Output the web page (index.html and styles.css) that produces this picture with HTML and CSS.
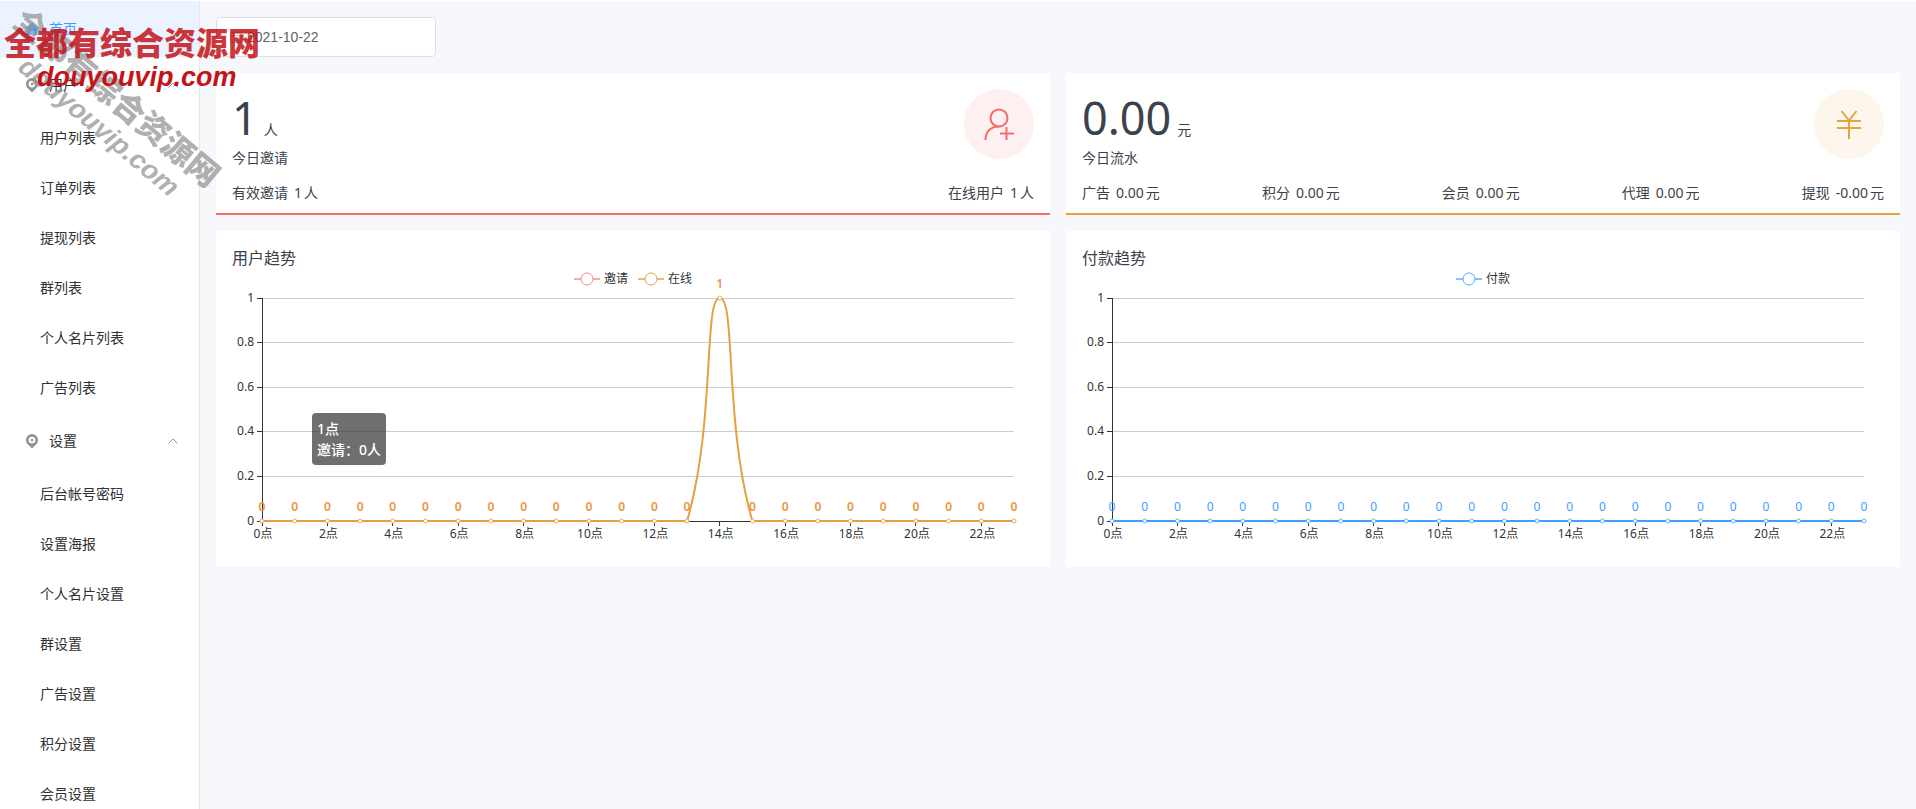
FILE: index.html
```html
<!DOCTYPE html>
<html lang="zh-CN">
<head>
<meta charset="utf-8">
<meta name="viewport" content="width=device-width, initial-scale=1">
<title>首页</title>
<link rel="stylesheet" href="styles.css">
</head>
<body>
<svg class="symbols" aria-hidden="true">
  <symbol id="home" viewBox="0 0 16 16">
    <path fill="currentColor" d="M8 1.500 15.500 8H13.500v6H9.500v-4h-3v4h-4V8H.5Z"/>
  </symbol>
  <symbol id="pin" viewBox="0 0 16 16">
    <path fill="currentColor" fill-rule="evenodd" d="M8 15.500 4.200 11.800A6.100 6.100 0 0 1 1.900 7.100a6.100 6.100 0 0 1 12.200 0 6.100 6.100 0 0 1-2.300 4.700ZM8 3.700a3.400 3.400 0 1 0 0 6.800 3.400 3.400 0 0 0 0-6.800Z"/>
    <circle cx="8" cy="7.100" r="1.300" fill="currentColor"/>
  </symbol>
  <symbol id="chevron" viewBox="0 0 12 12">
    <path d="M1.500 8.500 6 4l4.500 4.500" fill="none" stroke="currentColor"/>
  </symbol>
</svg>
<div class="layout">
  <nav class="sidebar">
    <a class="item active" href="#"><svg class="icon"><use href="#home"/></svg><span>首页</span></a>
    <button class="item" type="button"><svg class="icon"><use href="#pin"/></svg><span>用户</span><svg class="arrow"><use href="#chevron"/></svg></button>
    <div class="submenu">
      <a href="#">用户列表</a>
      <a href="#">订单列表</a>
      <a href="#">提现列表</a>
      <a href="#">群列表</a>
      <a href="#">个人名片列表</a>
      <a href="#">广告列表</a>
    </div>
    <button class="item" type="button"><svg class="icon"><use href="#pin"/></svg><span>设置</span><svg class="arrow"><use href="#chevron"/></svg></button>
    <div class="submenu">
      <a href="#">后台帐号密码</a>
      <a href="#">设置海报</a>
      <a href="#">个人名片设置</a>
      <a href="#">群设置</a>
      <a href="#">广告设置</a>
      <a href="#">积分设置</a>
      <a href="#">会员设置</a>
    </div>
  </nav>
  <main class="main">
    <label class="date">
      <svg class="calendar" viewBox="0 0 14 14" fill="none" stroke="currentColor"><path d="M1.500 2.500h11v10h-11zM1.500 5.500h11M4.500 1v3M9.500 1v3M4 8h2M8 8h2M4 10.500h2M8 10.500h2"/></svg>
      <input type="text" value="2021-10-22" aria-label="日期">
    </label>
    <div class="grid">
      <section class="card stat red">
        <div class="stat-head">
          <div>
            <div class="big"><strong>1</strong><span>人</span></div>
            <div class="caption">今日邀请</div>
          </div>
          <div class="badge">
            <svg viewBox="0 0 32 32" fill="none" stroke="currentColor" stroke-width="2"><circle cx="16" cy="10" r="8.500"/><path d="M2.500 32c0-8 5-13.500 13.500-13.500M23.500 19V32M17 25.500H31"/></svg>
          </div>
        </div>
        <div class="details">
          <div><span>有效邀请</span><b>1</b><i>人</i></div>
          <div><span>在线用户</span><b>1</b><i>人</i></div>
        </div>
      </section>
      <section class="card stat orange">
        <div class="stat-head">
          <div>
            <div class="big"><strong>0.00</strong><span>元</span></div>
            <div class="caption">今日流水</div>
          </div>
          <div class="badge">
            <svg viewBox="0 0 32 32" fill="none" stroke="currentColor" stroke-width="2"><path d="m8.500 3 7.500 9.500L23.500 3M4 13h24M4 20h24M16 12.500V31"/></svg>
          </div>
        </div>
        <div class="details">
          <div><span>广告</span><b>0.00</b><i>元</i></div>
          <div><span>积分</span><b>0.00</b><i>元</i></div>
          <div><span>会员</span><b>0.00</b><i>元</i></div>
          <div><span>代理</span><b>0.00</b><i>元</i></div>
          <div><span>提现</span><b>-0.00</b><i>元</i></div>
        </div>
      </section>
      <section class="card">
        <h2>用户趋势</h2>
        <div class="legend">
          <button type="button" class="key pink"><svg viewBox="0 0 26 14"><path d="M0 7h26"/><circle cx="13" cy="7" r="6"/></svg>邀请</button>
          <button type="button" class="key amber"><svg viewBox="0 0 26 14"><path d="M0 7h26"/><circle cx="13" cy="7" r="6"/></svg>在线</button>
        </div>
        <div class="chart">
          <svg class="plot users" data-peak="14"></svg>
          <div class="tooltip">1点<br>邀请：0人</div>
        </div>
      </section>
      <section class="card">
        <h2>付款趋势</h2>
        <div class="legend">
          <button type="button" class="key blue"><svg viewBox="0 0 26 14"><path d="M0 7h26"/><circle cx="13" cy="7" r="6"/></svg>付款</button>
        </div>
        <div class="chart">
          <svg class="plot pay"></svg>
        </div>
      </section>
    </div>
  </main>
</div>
<div class="mark mark-gray" aria-hidden="true"><div>全都有综合资源网</div><em>douyouvip.com</em></div>
<div class="mark mark-red" aria-hidden="true"><div>全都有综合资源网</div><em>douyouvip.com</em></div>
<script src="chart.js"></script>
</body>
</html>
```
FILE: styles.css
```css
* { box-sizing: border-box; }
body {
  margin: 0;
  padding-top: 1px;
  height: 100vh;
  overflow: hidden;
  position: relative;
  font: 14px/20px "Noto Sans", "Noto Sans CJK SC", sans-serif;
  color: #3b424c;
  background: #fff;
}
.symbols { position: absolute; width: 0; height: 0; }
.layout { display: flex; height: 100%; }
a { color: inherit; text-decoration: none; }
button { font: inherit; color: inherit; background: none; border: 0; padding: 0; }

.sidebar {
  flex: 0 0 200px;
  border-right: 1px solid #e6e6e6;
  background: #fff;
  color: #303133;
  overflow: hidden;
}
.item {
  display: flex;
  align-items: center;
  width: 100%;
  height: 56px;
  padding: 0 20px 0 24px;
  gap: 9px;
  text-align: left;
}
.item.active { background: #eaf3ff; color: #409eff; }
.item .icon { width: 16px; height: 16px; color: #909399; }
.item.active .icon { color: #409eff; }
.item .arrow { width: 12px; height: 12px; margin-left: auto; color: #909399; }
.submenu a { display: block; height: 50px; line-height: 50px; padding-left: 40px; }

.main { flex: 1; min-width: 0; padding: 16px; background: #f6f8fc; }
.date {
  display: flex;
  align-items: center;
  gap: 4px;
  width: 220px;
  height: 40px;
  padding: 0 12px;
  border: 1px solid #dcdfe6;
  border-radius: 4px;
  background: #fff;
}
.calendar { flex: none; width: 14px; height: 14px; color: #c0c4cc; }
.date input {
  flex: 1;
  min-width: 0;
  padding: 0;
  border: 0;
  outline: 0;
  background: none;
  color: #606266;
  font: 14px/20px "Liberation Sans", sans-serif;
}
.grid {
  display: grid;
  grid-template-columns: minmax(0, 1fr) minmax(0, 1fr);
  gap: 16px;
  margin-top: 16px;
}
.card { background: #fff; padding: 16px; }
.stat { padding-bottom: 10px; border-bottom: 2px solid; }
.stat.red { border-color: #f56c6c; }
.stat.orange { border-color: #e6a23c; }
.stat-head { display: flex; justify-content: space-between; }
.big { display: flex; align-items: baseline; gap: 6px; height: 59px; line-height: 58px; }
.big strong { font-size: 45px; font-weight: 400; }
.caption { height: 25px; }
.badge {
  display: flex;
  align-items: center;
  justify-content: center;
  width: 70px;
  height: 70px;
  border-radius: 50%;
}
.badge svg { width: 32px; height: 32px; }
.red .badge { color: #f56c6c; background: #feeff0; }
.orange .badge { color: #e6a23c; background: #fdf6ec; }
.details { display: flex; justify-content: space-between; margin-top: 10px; }
.details span { margin-right: 6px; }
.details b, .details i { font-weight: 400; font-style: normal; }
.details i { margin-left: 2px; }

h2 { margin: 0; font-size: 16px; line-height: 22px; font-weight: 400; }
.legend { display: flex; justify-content: center; gap: 10px; height: 20px; }
.key { display: flex; align-items: center; gap: 4px; font-size: 12px; color: #333; }
.key svg { width: 26px; height: 14px; fill: #fff; stroke: currentColor; }
.key path { stroke-width: 2; opacity: .7; }
.key.pink svg { color: #f78989; }
.key.amber svg { color: #e6a23c; }
.key.blue svg { color: #53a8ff; }
.chart { position: relative; }
.plot { display: block; width: 100%; height: 262px; overflow: visible; font-size: 12px; }
.plot text { fill: #333; text-anchor: middle; }
.plot .tick { text-anchor: end; }
.plot .rule { stroke: #ccc; }
.plot .axis { stroke: #333; }
.plot .line { fill: none; stroke: currentColor; stroke-width: 2; }
.plot circle { fill: #fff; stroke: var(--dot); }
.plot .value { fill: currentColor; }
.users { color: #e6a040; --dot: #f0a46c; }
.users .value { fill: #e8963f; font-weight: 600; }
.pay { color: #409eff; --dot: #66b1ff; }
.tooltip {
  position: absolute;
  left: 80px;
  top: 124px;
  padding: 5px;
  border-radius: 4px;
  background: rgba(50, 50, 50, .7);
  color: #fff;
  font-weight: 500;
  line-height: 21px;
  white-space: nowrap;
}

.mark {
  position: absolute;
  pointer-events: none;
  white-space: nowrap;
  font-family: "Noto Sans CJK SC", sans-serif;
  font-weight: 900;
  font-size: 32px;
  line-height: 36px;
}
.mark em {
  display: block;
  margin-left: 33px;
  font: italic bold 27px/36px "Liberation Sans", sans-serif;
}
.mark-red { left: 4px; top: 23px; color: rgba(194, 18, 24, .86); }
.mark-red em { color: #c31419; }
.mark-gray {
  left: 32px;
  top: 0;
  color: rgba(150, 150, 150, .75);
  transform: rotate(40deg);
  transform-origin: 0 0;
}
```
FILE: chart.js
```js
const TOP = 9, BASE = 232, LEFT = 30, RIGHT = 20, HOURS = 24;

function draw(svg) {
  const width = svg.clientWidth;
  const step = (width - LEFT - RIGHT) / (HOURS - 1);
  const x = (h) => LEFT + h * step;
  const end = x(HOURS - 1);
  const peak = svg.dataset.peak ? Number(svg.dataset.peak) : -1;
  const crisp = (v) => Math.floor(v) + 0.5;
  let out = "";

  for (let i = 0; i <= 5; i++) {
    const y = crisp(BASE - (BASE - TOP) * i / 5);
    if (i) out += `<path class="rule" d="M${LEFT} ${y}H${end}"/>`;
    out += `<path class="axis" d="M${LEFT - 5} ${y}h5"/>`;
    out += `<text class="tick" x="${LEFT - 8}" y="${y + 3}">${i / 5}</text>`;
  }
  out += `<path class="axis" d="M${LEFT + 0.5} ${TOP}V${BASE}M${LEFT} ${BASE + 0.5}H${end}"/>`;
  for (let h = 0; h < HOURS; h += 2) {
    out += `<path class="axis" d="M${crisp(x(h))} ${BASE}v5"/>`;
    out += `<text x="${x(h) + 1}" y="${BASE + 17}">${h}点</text>`;
  }

  let d = `M${LEFT} ${BASE}`;
  if (peak > 0) {
    const near = step * 0.87, rise = (BASE - TOP) * 0.435;
    d += `H${x(peak - 1)}`;
    d += `C${x(peak - 1) + near} ${BASE - rise} ${x(peak) - step / 2} ${TOP} ${x(peak)} ${TOP}`;
    d += `S${x(peak + 1) - near} ${BASE - rise} ${x(peak + 1)} ${BASE}`;
  }
  out += `<path class="line" d="${d}H${end}"/>`;
  for (let h = 0; h < HOURS; h++) {
    const y = h === peak ? TOP : BASE;
    out += `<circle cx="${x(h)}" cy="${y}" r="2"/>`;
    out += `<text class="value" x="${x(h)}" y="${y - 10}">${h === peak ? 1 : 0}</text>`;
  }
  svg.innerHTML = out;
}

function drawAll() {
  document.querySelectorAll(".plot").forEach(draw);
}
drawAll();
window.addEventListener("resize", drawAll);
```
